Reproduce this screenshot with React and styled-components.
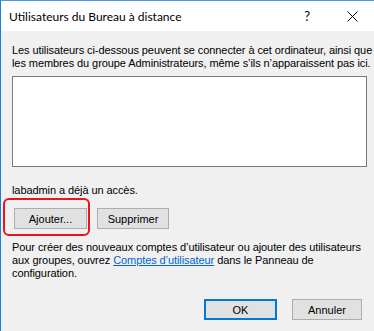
import React from "react";
import styled, { createGlobalStyle } from "styled-components";

const Global = createGlobalStyle`
  html, body { margin: 0; padding: 0; background: #f0f0f0; }
  #root { width: 374px; height: 331px; }
`;

const Window = styled.div`
  box-sizing: border-box;
  width: 374px;
  height: 331px;
  display: flex;
  flex-direction: column;
  border-left: 1px solid #1a7fd6;
  border-top: 1px solid #4c9be0;
  background: #f0f0f0;
  font-family: "Liberation Sans", Arial, sans-serif;
  font-size: 11px;
  letter-spacing: -0.08px;
  color: #000;
  overflow: hidden;
`;

const TitleBar = styled.div`
  height: 30px;
  flex: none;
  background: #fff;
  display: flex;
  align-items: center;
  padding-left: 8px;
`;

const Title = styled.div`
  flex: 1;
  font-family: "Lato", "Segoe UI", sans-serif;
  font-size: 12px;
  letter-spacing: 0;
  color: #000;
`;

const CtrlButton = styled.div`
  width: ${(p) => p.$w}px;
  height: 30px;
  display: flex;
  align-items: center;
  justify-content: center;
  font-family: "Lato", sans-serif;
  font-size: 13px;
  color: #000;
`;

const Body = styled.div`
  flex: 1;
  display: flex;
  flex-direction: column;
  padding: 13px 7px 0 11px;
`;

const Text = styled.p`
  margin: 0;
  line-height: 13px;
  white-space: pre;
`;

const ListBox = styled.div`
  box-sizing: border-box;
  width: 355px;
  height: 91px;
  background: #fff;
  border: 1px solid #7a7a7a;
  margin: 6px 0 17px;
`;

const ButtonRow = styled.div`
  position: relative;
  display: flex;
  gap: 10px;
  margin: 11px 0 0 2px;
  height: 21px;
`;

const Button = styled.button`
  box-sizing: border-box;
  width: ${(p) => p.$w || 73}px;
  height: 21px;
  padding: 0;
  background: #e1e1e1;
  border: ${(p) => (p.$default ? "2px solid #0078d7" : "1px solid #adadad")};
  font-family: "Liberation Sans", Arial, sans-serif;
  font-size: 11px;
  color: #000;
`;

const Highlight = styled.div`
  position: absolute;
  left: -11px;
  top: -10px;
  width: 87px;
  height: 38px;
  box-sizing: border-box;
  border: 2px solid #e8141e;
  border-radius: 6px;
  pointer-events: none;
`;

const Link = styled.a`
  color: #0066cc;
  text-decoration: underline;
`;

const Paragraph = styled(Text)`
  margin-top: 12px;
`;

const Footer = styled.div`
  display: flex;
  justify-content: flex-end;
  gap: 15px;
  margin: 19px 5px 0 0;
`;

function CloseIcon() {
  return (
    <svg width="11" height="11" viewBox="0 0 11 11">
      <path d="M0.5 0.5 L10.5 10.5 M10.5 0.5 L0.5 10.5" stroke="#000" strokeWidth="1" fill="none" />
    </svg>
  );
}

export default function App() {
  return (
    <>
      <Global />
      <Window>
        <TitleBar>
          <Title>Utilisateurs du Bureau à distance</Title>
          <CtrlButton $w={46}>?</CtrlButton>
          <CtrlButton $w={44}>
            <CloseIcon />
          </CtrlButton>
        </TitleBar>
        <Body>
          <Text>
            {"Les utilisateurs ci-dessous peuvent se connecter à cet ordinateur, ainsi que\nles membres du groupe Administrateurs, même s’ils n’apparaissent pas ici."}
          </Text>
          <ListBox />
          <Text>labadmin a déjà un accès.</Text>
          <ButtonRow>
            <Highlight />
            <Button $w={73}>Ajouter...</Button>
            <Button $w={72}>Supprimer</Button>
          </ButtonRow>
          <Paragraph>
            Pour créer des nouveaux comptes d’utilisateur ou ajouter des utilisateurs
            <br />
            aux groupes, ouvrez <Link>Comptes d’utilisateur</Link> dans le Panneau de
            <br />
            configuration.
          </Paragraph>
          <Footer>
            <Button $default $w={73}>OK</Button>
            <Button $w={70}>Annuler</Button>
          </Footer>
        </Body>
      </Window>
    </>
  );
}
